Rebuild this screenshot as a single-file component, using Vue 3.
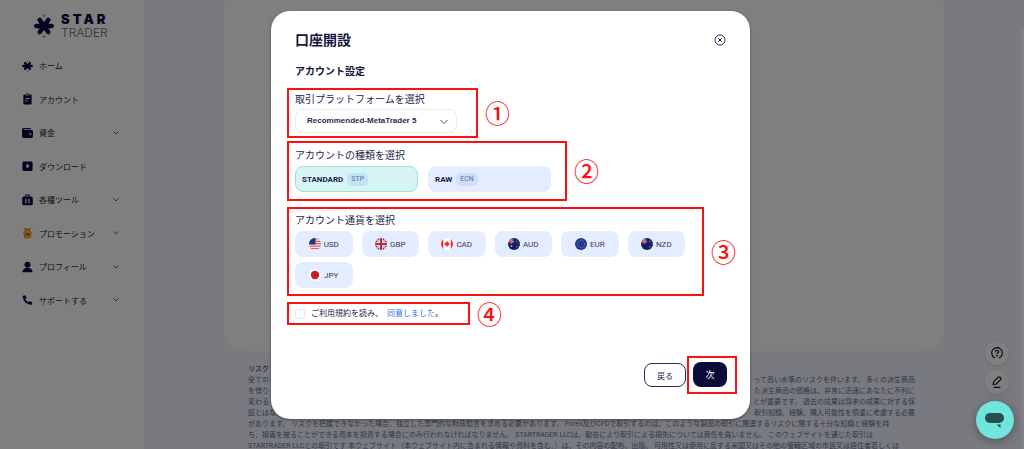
<script setup>
import { ref } from 'vue'

const nav = [
  { label: 'ホーム', icon: 'star' },
  { label: 'アカウント', icon: 'account' },
  { label: '資金', icon: 'wallet', more: true },
  { label: 'ダウンロード', icon: 'download' },
  { label: '各種ツール', icon: 'tools', more: true },
  { label: 'プロモーション', icon: 'promo', more: true },
  { label: 'プロフィール', icon: 'profile', more: true },
  { label: 'サポートする', icon: 'phone', more: true }
]

const types = [
  { name: 'STANDARD', tag: 'STP' },
  { name: 'RAW', tag: 'ECN' }
]
const type = ref('STANDARD')
const currencies = ['USD', 'GBP', 'CAD', 'AUD', 'EUR', 'NZD', 'JPY']
const agreed = ref(false)

const split = [
  ['全ての', 'って高い水準のリスクを伴います。 多くの派生商品'],
  ['を借り', 'た派生商品の価格は、非常に迅速にあなたに不利に'],
  ['変わる', 'とが重要です。 過去の成果は将来の成果に対する保'],
  ['証とはな', '取引知識、経験、購入可能性を慎重に考慮する必要']
]
const lines = [
  'があります。 リスクを把握できなかった場合、独立した専門的な財政助言を求める必要があります。 Forex及びCFDで取引するのは、このような製品の取引に関連するリスクに関する十分な知識と経験を持',
  'ち、損害を被ることができる資本を投資する場合にのみ行われなければなりません。 STARTRADER LLCは、勧告により取引による損失については責任を負いません。 このウェブサイトを通じた取引は',
  'STARTRADER LLCとの取引です 本ウェブサイト（本ウェブサイト内に含まれる情報や資料を含む。）は、その内容の配布、出版、 可用性又は使用に反する米国又はその他の管轄区域の市民又は居住者若しくは'
]
</script>

<template>
  <div class="page">
    <aside class="sidebar">
      <div class="logo">
        <svg class="logo-mark" viewBox="0 0 20 24">
          <g stroke="#0b0b40" stroke-width="4.600" stroke-linecap="round">
            <path d="M2.300 12H17.700M5.800 6L14.200 18M14.200 6L5.800 18" />
          </g>
          <circle cx="10" cy="1.500" r="1.500" fill="#5fd0c8" />
          <circle cx="10" cy="22.500" r="1.500" fill="#5fd0c8" />
        </svg>
        <div class="wordmark">
          <span class="star">STAR</span>
          <span class="trader">TRADER</span>
        </div>
      </div>
      <nav class="nav">
        <a v-for="n in nav" :key="n.label" href="#" class="nav-item">
          <svg class="nav-icon" viewBox="0 0 12 12">
            <g v-if="n.icon === 'star'">
              <path d="M1.500 6H10.500M3.500 2.900L8.500 9.100M8.500 2.900L3.500 9.100" stroke="#0b0b40" stroke-width="2.700" stroke-linecap="round" />
              <circle cx="6" cy=".4" r=".7" fill="#55a" /><circle cx="6" cy="11.600" r=".7" fill="#55a" />
            </g>
            <g v-else-if="n.icon === 'account'">
              <path d="M2.500 1h1.200l.8 1.200h3L8.300 1h1.200a1 1 0 0 1 1 1v9a1 1 0 0 1-1 1h-7a1 1 0 0 1-1-1V2a1 1 0 0 1 1-1zM4.500 0h3v1.400h-3z" fill="#0b0b40" />
              <path d="M3.500 5.500h5M3.500 8h3" stroke="#fff" stroke-width="1" />
            </g>
            <g v-else-if="n.icon === 'wallet'">
              <path d="M2 .5h7.500v1.200H2.200v.8H10a2 2 0 0 1 2 2V9.500a2 2 0 0 1-2 2H2a2 2 0 0 1-2-2V2.500a2 2 0 0 1 2-2z" fill="#0b0b40" />
              <circle cx="9.200" cy="7" r="1" fill="#fff" />
            </g>
            <g v-else-if="n.icon === 'download'">
              <rect x=".5" y="1" width="11" height="10.500" rx="1.500" fill="#0b0b40" />
              <path d="M5.300 3.500h1.400v2h1.800L6 8.500 3.500 5.500h1.800z" fill="#fff" />
            </g>
            <g v-else-if="n.icon === 'tools'">
              <path d="M4 2.500V1.200Q4 .6 4.600 .6h2.800Q8 .6 8 1.200V2.500" fill="none" stroke="#0b0b40" stroke-width="1.200" />
              <rect x=".2" y="2.200" width="11.600" height="9.600" rx="2" fill="#0b0b40" />
              <path d="M4.200 4.500v5M7.800 4.500v5" stroke="#fff" stroke-width="1.300" />
            </g>
            <g v-else-if="n.icon === 'promo'">
              <path d="M2.500 .2Q4.300 0 6 1.500Q7.700 0 9.500 .2Q10.200 2.500 8.500 4h-5Q1.800 2.500 2.500 .2z" fill="#e8952c" />
              <path d="M.3 4.500H11.700L10.800 7.200H1.200z" fill="#e9b98c" />
              <path d="M2 4h8v6.700q0 1-1 1H3q-1 0-1-1z" fill="#f39a20" />
              <circle cx="6" cy="7.500" r="1.600" fill="#d8452f" /><path d="M4 9.800h4M3.500 5h5" stroke="#fbd38a" stroke-width=".8" />
            </g>
            <g v-else-if="n.icon === 'profile'" fill="#0b0b40">
              <circle cx="6" cy="3.500" r="3.300" />
              <path d="M.5 11.800Q.5 8 4.500 7h3Q11.500 8 11.500 11.800z" />
            </g>
            <path v-else d="M1.200 1.300L3.300 .8Q3.800 .8 4 1.300L4.800 3.500Q4.900 4 4.500 4.300L3.600 5.100Q4.600 7.300 6.900 8.400L7.700 7.500Q8.100 7.100 8.500 7.300L10.800 8.200Q11.200 8.500 11.100 8.900L10.600 10.800Q10.500 11.200 10 11.200C5 11.200 1 7 .8 2Q.8 1.400 1.200 1.300z" fill="#0b0b40" />
          </svg>
          <span>{{ n.label }}</span>
          <svg v-if="n.more" class="nav-chevron" viewBox="0 0 6 6"><path d="M.5 1.500L3 4L5.500 1.500" fill="none" stroke="#555" stroke-width=".9" /></svg>
        </a>
      </nav>
    </aside>

    <main class="main">
      <div class="panel"></div>
      <section class="risk">
        <strong>リスク</strong>
        <p v-for="s in split" :key="s[0]" class="split"><span>{{ s[0] }}</span><span>{{ s[1] }}</span></p>
        <p v-for="l in lines" :key="l">{{ l }}</p>
      </section>
    </main>

    <div class="float-tools">
      <button class="round" aria-label="ヘルプ">
        <svg viewBox="0 0 14 14" fill="none" stroke="#15152f" stroke-width="1.400">
          <path d="M4.500 12.700A6.200 6.200 0 1 1 9.500 12.700M5.200 5.600Q5.200 3.800 7 3.800T8.800 5.500Q8.800 6.400 7.800 6.900Q7 7.300 7 8.200" />
          <circle cx="7" cy="10" r=".4" />
        </svg>
      </button>
      <button class="round" aria-label="編集">
        <svg viewBox="0 0 14 14" fill="none" stroke="#15152f" stroke-width="1.400" stroke-linejoin="round">
          <path d="M2.500 9.800L3.200 6.500L8.500 1.500Q9.700 .5 11 1.800T11.200 4.300L6 9.300zM3 13.300H11" />
        </svg>
      </button>
    </div>

    <div class="overlay">
      <div class="modal" role="dialog" aria-label="口座開設">
        <header class="modal-head">
          <h1>口座開設</h1>
          <button class="close" aria-label="閉じる">
            <svg viewBox="0 0 12 12" fill="none" stroke="#1c1f45"><circle cx="6" cy="6" r="5" stroke-width=".9" /><path d="M4.300 4.300L7.700 7.700M7.700 4.300L4.300 7.700" /></svg>
          </button>
        </header>
        <h2>アカウント設定</h2>

        <div class="step">
          <div class="frame platform">
            <label for="platform">取引プラットフォームを選択</label>
            <div class="select">
              <select id="platform"><option>Recommended-MetaTrader 5</option></select>
              <svg viewBox="0 0 8 6"><path d="M.5 1L4 4.500L7.500 1" fill="none" stroke="#4a4d66" /></svg>
            </div>
          </div>
          <span class="num">①</span>
        </div>

        <div class="step">
          <div class="frame types">
            <p class="label">アカウントの種類を選択</p>
            <div class="cards">
              <button v-for="t in types" :key="t.name" class="card" :class="{ on: type === t.name }" @click="type = t.name">
                {{ t.name }}<span class="tag">{{ t.tag }}</span>
              </button>
            </div>
          </div>
          <span class="num">②</span>
        </div>

        <div class="step third">
          <div class="frame money">
            <p class="label">アカウント通貨を選択</p>
            <div class="chips">
              <button v-for="c in currencies" :key="c" class="chip">
                <svg class="flag" viewBox="0 0 12 12">
                  <defs><clipPath :id="'f' + c"><circle cx="6" cy="6" r="6" /></clipPath></defs>
                  <g :clip-path="`url(#f${c})`">
                    <g v-if="c === 'USD'">
                      <path d="M0 0h12v12H0z" fill="#f6e3e6" />
                      <path d="M0 .9h12M0 3.300h12M0 5.700h12M0 8.100h12M0 10.500h12" stroke="#e0606c" stroke-width="1.200" />
                      <path d="M0 0h6.500v6.500H0z" fill="#27367f" />
                    </g>
                    <g v-else-if="c === 'GBP'">
                      <path d="M0 0h12v12H0z" fill="#27397f" />
                      <path d="M0 0L12 12M12 0L0 12" stroke="#fff" stroke-width="1.800" />
                      <path d="M0 0L12 12M12 0L0 12" stroke="#d32f3f" stroke-width=".5" />
                      <path d="M6 0V12M0 6H12" stroke="#fff" stroke-width="3.600" />
                      <path d="M6 0V12M0 6H12" stroke="#d22336" stroke-width="2.200" />
                    </g>
                    <g v-else-if="c === 'CAD'">
                      <path d="M0 0h12v12H0z" fill="#fff" />
                      <path d="M0 0h2.300v12H0zM9.700 0H12v12H9.700z" fill="#e5322f" />
                      <path d="M6 2.800L6.800 4.300 7.700 4 7.500 5.300 9 5.200 8.300 6.600 7 7.900H6.300V9H5.700V7.900H5L3.700 6.600 3 5.200 4.500 5.300 4.300 4 5.200 4.300z" fill="#e5322f" />
                    </g>
                    <g v-else-if="c === 'EUR'">
                      <path d="M0 0h12v12H0z" fill="#1f3696" />
                      <circle cx="6" cy="6" r="3.600" fill="none" stroke="#9a9b68" stroke-width=".9" stroke-dasharray=".9 1" />
                    </g>
                    <g v-else-if="c === 'JPY'">
                      <path d="M0 0h12v12H0z" fill="#fff" /><circle cx="6" cy="6" r="4.200" fill="#c1202f" />
                    </g>
                    <g v-else>
                      <path d="M0 0h12v12H0z" fill="#131f63" />
                      <path d="M0 1L5.500 5M5.500 1L0 5" stroke="#e8c8d2" stroke-width=".6" />
                      <path d="M3.200 0V5.500M0 3.300H6" stroke="#e6cbd6" stroke-width="1.300" />
                      <path d="M3.200 0V5.500M0 3.300H6" stroke="#d53a4c" stroke-width=".8" />
                      <g fill="#dfe3f5"><circle cx="8.800" cy="3.300" r=".5" /><circle cx="10.200" cy="5.500" r=".4" /><circle cx="8.800" cy="8.800" r=".5" /><circle v-if="c === 'AUD'" cx="3.500" cy="8" r=".8" /></g>
                    </g>
                  </g>
                </svg>
                <span>{{ c }}</span>
              </button>
            </div>
          </div>
          <span class="num">③</span>
        </div>

        <div class="step fourth">
          <div class="frame terms">
            <input id="agree" v-model="agreed" type="checkbox" />
            <label for="agree">ご利用規約を読み、<a href="#">同意しました</a>。</label>
          </div>
          <span class="num">④</span>
        </div>

        <footer class="actions">
          <button class="back">戻る</button>
          <div class="mark"><button class="next">次</button></div>
        </footer>
      </div>
    </div>

    <button class="chat" aria-label="チャット">
      <svg viewBox="0 0 20 14" fill="#24504d"><rect x="0" y="0" width="19" height="10" rx="5" /><path d="M11.500 11.500H15.500V15z" /></svg>
    </button>
    <div class="track"></div>
  </div>
</template>

<style>
body { margin: 0; }
</style>

<style scoped>
* { box-sizing: border-box; }
p, h1, h2 { margin: 0; }
button { border: 0; padding: 0; font-family: inherit; cursor: pointer; }
svg { display: block; overflow: visible; }
a { text-decoration: none; }
.page {
  position: relative;
  display: flex;
  height: 100vh;
  overflow: hidden;
  background: #f3f5fe;
  color: #14163c;
  font-family: Roboto, "Noto Sans CJK JP", sans-serif;
}
.sidebar { flex: none; width: 144px; background: #fff; }
.logo { display: flex; align-items: center; gap: 7px; height: 49px; padding: 3px 0 0 34px; }
.logo-mark { width: 20px; height: 24px; }
.wordmark { display: flex; flex-direction: column; font-family: Inter, sans-serif; }
.star { font-size: 13px; line-height: 13px; font-weight: 900; letter-spacing: 3px; color: #0b0b40; }
.trader { font-size: 12px; line-height: 13px; font-weight: 300; color: #666; }
.nav { display: grid; grid-template-rows: repeat(8, 1fr); height: 268px; }
.nav-item { display: flex; align-items: center; padding: 0 25px 0 22px; color: #1c1c3c; font-size: 8px; }
.nav-icon { width: 11px; height: 12px; margin-right: 6px; }
.nav-chevron { width: 6px; height: 6px; margin-left: auto; }
.main { flex: 1; min-width: 0; padding: 0 80px; }
.panel { height: 363px; margin-top: -12px; border-radius: 20px; background: #fff; }
.risk { padding: 13px 29px 0 24px; font-size: 7px; line-height: 11px; color: #656d9a; white-space: nowrap; }
.risk strong { display: block; }
.split { display: flex; justify-content: space-between; }
.float-tools { position: absolute; right: 15px; bottom: 55px; display: grid; gap: 5px; }
.round { display: grid; place-items: center; width: 24px; height: 24px; border-radius: 50%; background: #fff; box-shadow: 0 1px 4px #0002; }
.round svg { width: 12px; height: 12px; }
.overlay {
  position: absolute;
  inset: 0;
  display: flex;
  justify-content: center;
  align-items: flex-start;
  padding: 11px 3px 0 0;
  background: rgba(0, 0, 0, .5);
}
.modal {
  width: 479px;
  max-width: 94%;
  padding: 19px 13px 25px 16px;
  border-radius: 19px;
  background: #fff;
  box-shadow: 0 1px 3px #0006;
}
.modal-head { display: flex; align-items: center; justify-content: space-between; padding: 0 11px 0 8px; }
h1 { font-size: 14px; line-height: 20px; font-weight: 700; }
.close { width: 12px; height: 12px; background: none; }
h2 { margin: 14px 0 8px; padding-left: 8px; font-size: 10px; line-height: 16px; font-weight: 600; }
.step { display: flex; align-items: center; gap: 7px; margin-bottom: 3px; }
.step.third, .step.fourth { margin-top: 6px; margin-bottom: 0; }
.frame { border: 2px solid #fb0f0f; }
.frame > label, .label { display: block; font-size: 10px; line-height: 14px; color: #24264c; }
.num { flex: none; height: 24px; margin: -1px 0; font: 500 25px/22px "Noto Sans CJK JP", sans-serif; color: #fb0f0f; }
.platform { padding: 3px 19px 3px 6px; }
.select { position: relative; width: 162px; margin-top: 2px; }
.select select {
  display: block;
  width: 100%;
  height: 24px;
  padding: 0 24px 0 11px;
  appearance: none;
  border: 1px solid #e6eafa;
  border-radius: 8px;
  background: #fff;
  color: #2a2c4c;
  font: 700 8px/22px "Liberation Sans", sans-serif;
}
.select svg { position: absolute; right: 9px; top: 10px; width: 8px; height: 6px; pointer-events: none; }
.types { padding: 6px 14px 7px 6px; }
.cards { display: grid; grid-template-columns: 123px 123px; gap: 10px; margin-top: 3px; }
.card {
  display: flex;
  align-items: center;
  gap: 4px;
  height: 26px;
  padding: 0 6px;
  border: 1px solid #e4edff;
  border-radius: 8px;
  background: #e4edff;
  color: #1b1d4b;
  font-size: 8px;
  font-weight: 700;
}
.card.on { border-color: #98e4dd; background: #d5f4f3; }
.tag { padding: 0 4px; border-radius: 5px; background: #cdddfd; color: #5c6c98; font-size: 7px; line-height: 13px; font-weight: 400; }
.on .tag { background: #c2e4f6; }
.money { padding: 5px 17px 6px 6px; }
.chips { display: grid; grid-template-columns: repeat(6, 1fr); gap: 5px 9px; width: 390px; margin-top: 3px; }
.chip {
  display: flex;
  align-items: center;
  justify-content: center;
  gap: 3px;
  height: 26px;
  border-radius: 8px;
  background: #e4edff;
  color: #34375c;
  font-size: 8px;
}
.flag { width: 12px; height: 12px; }
.terms { display: flex; align-items: center; width: 183px; height: 23px; padding-left: 6px; }
.terms input { flex: none; width: 10px; height: 10px; margin: 0 6px 0 0; appearance: none; border: 1px solid #e2e6f8; border-radius: 2px; }
.terms > label { font-size: 8px; line-height: 14px; white-space: nowrap; }
.terms a { margin-left: 4px; color: #2f74e8; }
.actions { display: flex; justify-content: flex-end; align-items: center; gap: 1px; margin-top: 31px; }
.back { width: 42px; height: 24px; border: 1px solid #2b2c5c; border-radius: 8px; background: #fff; color: #1b1d3f; font-size: 8px; }
.mark { padding: 4px 8px 5px 4px; border: 2px solid #fb0f0f; }
.next { display: block; width: 34px; height: 25px; border-radius: 8px; background: #0b0b38; color: #fff; font-size: 9px; }
.chat {
  position: absolute;
  right: 10px;
  bottom: 10px;
  display: grid;
  place-items: center;
  width: 38px;
  height: 38px;
  border-radius: 50%;
  background: #70e6da;
  box-shadow: 0 2px 8px #0005;
}
.chat svg { width: 20px; height: 14px; }
.track { position: absolute; right: 0; top: 28px; bottom: 0; width: 3px; background: #808186; }
</style>
